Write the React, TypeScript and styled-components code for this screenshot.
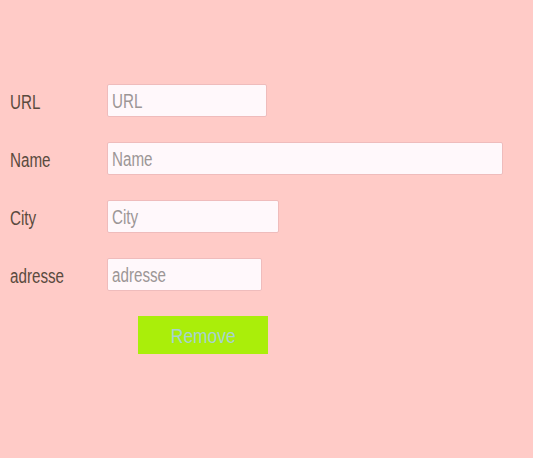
import React from "react";
import styled, { createGlobalStyle } from "styled-components";

const SCALE = 0.76;

const Global = createGlobalStyle`
  html, body { margin: 0; padding: 0; background: #ffcbc7; }
  body { font-family: "Liberation Sans", Arial, sans-serif; }
`;

const Page = styled.div`
  width: 533px;
  height: 458px;
  background: #ffcbc7;
  padding: 84px 0 0 10px;
  box-sizing: border-box;
`;

const Form = styled.form`
  display: flex;
  flex-direction: column;
  gap: 25px;
`;

const Row = styled.div`
  display: flex;
  align-items: flex-start;
  height: 33px;
`;

const LabelCell = styled.label`
  width: 97px;
  height: 33px;
  padding-top: 2px;
  box-sizing: border-box;
  line-height: 32px;
  white-space: nowrap;
`;

const LabelText = styled.span`
  display: inline-block;
  font-size: 20px;
  color: #5a4a3e;
  transform: scaleX(${SCALE});
  transform-origin: left center;
`;

const Field = styled.div<{ $w: number }>`
  width: ${(p) => p.$w}px;
  height: 33px;
  box-sizing: border-box;
  border: 1px solid #efbcbc;
  border-radius: 2px;
  background: #fff8fb;
  overflow: hidden;
`;

const Input = styled.input<{ $w: number }>`
  display: block;
  width: ${(p) => (p.$w - 2) / SCALE}px;
  height: 31px;
  box-sizing: border-box;
  border: none;
  background: transparent;
  padding: 1px 0 0 ${4 / SCALE}px;
  margin: 0;
  font-family: inherit;
  font-size: 20px;
  color: #333;
  outline: none;
  transform: scaleX(${SCALE});
  transform-origin: left center;
  &::placeholder { color: #9c9696; }
`;

const ButtonRow = styled.div`
  padding-left: 128px;
`;

const Button = styled.button`
  width: 130px;
  height: 38px;
  border: none;
  padding: 3px 0 0;
  background: #aaee0a;
  cursor: pointer;
`;

const ButtonText = styled.span`
  display: inline-block;
  font-family: "Liberation Sans", Arial, sans-serif;
  font-size: 20px;
  color: #a7d3d0;
  transform: scaleX(0.87);
`;

const fields = [
  { label: "URL", w: 160 },
  { label: "Name", w: 396 },
  { label: "City", w: 172 },
  { label: "adresse", w: 155 },
];

export default function App() {
  return (
    <Page>
      <Global />
      <Form onSubmit={(e) => e.preventDefault()}>
        {fields.map((f) => (
          <Row key={f.label}>
            <LabelCell>
              <LabelText>{f.label}</LabelText>
            </LabelCell>
            <Field $w={f.w}>
              <Input $w={f.w} placeholder={f.label} />
            </Field>
          </Row>
        ))}
        <ButtonRow>
          <Button type="button">
            <ButtonText>Remove</ButtonText>
          </Button>
        </ButtonRow>
      </Form>
    </Page>
  );
}
